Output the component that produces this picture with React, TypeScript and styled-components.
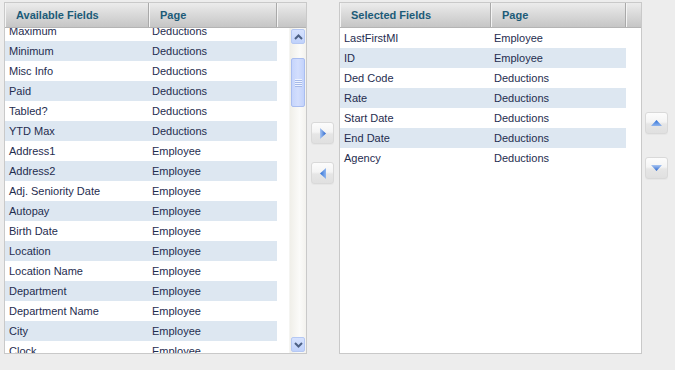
import React, { useLayoutEffect, useRef } from "react";
import styled, { createGlobalStyle } from "styled-components";

const Global = createGlobalStyle`
  html, body { margin: 0; padding: 0; background: #ededed; }
  body { font-family: "Liberation Sans", Arial, sans-serif; font-size: 11px; }
`;

type Row = { name: string; page: string };

const available: Row[] = [
  ["Maximum", "Deductions"],
  ["Minimum", "Deductions"],
  ["Misc Info", "Deductions"],
  ["Paid", "Deductions"],
  ["Tabled?", "Deductions"],
  ["YTD Max", "Deductions"],
  ["Address1", "Employee"],
  ["Address2", "Employee"],
  ["Adj. Seniority Date", "Employee"],
  ["Autopay", "Employee"],
  ["Birth Date", "Employee"],
  ["Location", "Employee"],
  ["Location Name", "Employee"],
  ["Department", "Employee"],
  ["Department Name", "Employee"],
  ["City", "Employee"],
  ["Clock", "Employee"],
  ["Pay Group", "Employee"],
].map(([name, page]) => ({ name, page }));

const selected: Row[] = [
  ["LastFirstMI", "Employee"],
  ["ID", "Employee"],
  ["Ded Code", "Deductions"],
  ["Rate", "Deductions"],
  ["Start Date", "Deductions"],
  ["End Date", "Deductions"],
  ["Agency", "Deductions"],
].map(([name, page]) => ({ name, page }));

const Page = styled.div`
  display: flex;
  align-items: flex-start;
  padding: 2px 0 0 4px;
  height: 368px;
  box-sizing: border-box;
`;

const Panel = styled.div<{ $w: number }>`
  width: ${(p) => p.$w}px;
  height: 352px;
  box-sizing: border-box;
  border: 1px solid #c9c9c9;
  background: #fff;
  display: flex;
  flex-direction: column;
  overflow: hidden;
`;

const Header = styled.div<{ $cols: string }>`
  display: grid;
  grid-template-columns: ${(p) => p.$cols};
  height: 24px;
  flex: none;
  border-bottom: 1px solid #b4b4b4;
  background: linear-gradient(#ececec, #dadada 45%, #c6c6c6);
`;

const HeadCell = styled.div`
  display: flex;
  align-items: center;
  padding-left: 11px;
  font-weight: bold;
  font-size: 11px;
  color: #1c5b78;
  border-right: 1px solid #a9a9a9;
  box-shadow: inset 1px 0 0 #f4f4f4;
  white-space: nowrap;
`;

const HeadFill = styled.div`
  box-shadow: inset 1px 0 0 #f4f4f4;
`;

const Body = styled.div`
  flex: 1;
  display: flex;
  min-height: 0;
`;

const ListViewport = styled.div`
  flex: 1;
  overflow: hidden;
`;

const RowLine = styled.div<{ $cols: string; $shade: boolean }>`
  display: grid;
  grid-template-columns: ${(p) => p.$cols};
  height: 20px;
  line-height: 20px;
  color: #1f2d4f;
  font-size: 11px;
  white-space: nowrap;
  & > span {
    background: ${(p) => (p.$shade ? "#dde7f1" : "#ffffff")};
    padding-left: 3px;
    overflow: hidden;
  }
  & > span:first-child { padding-left: 4px; }
`;

const Scrollbar = styled.div`
  width: 16px;
  flex: none;
  margin-left: 12px;
  display: flex;
  flex-direction: column;
  background: linear-gradient(90deg, #f0efe9, #fbfbf9 60%, #f3f2ee);
  border-left: 1px solid #f5f5f2;
`;

const ScrollBtn = styled.div<{ $end?: boolean }>`
  height: 15px;
  margin: 1px 1px ${(p) => (p.$end ? 1 : 0)}px 1px;
  flex: none;
  box-sizing: border-box;
  border: 1px solid #b5c8f3;
  border-radius: 2px;
  background: linear-gradient(#d6e2fe, #c0d2fb);
  display: flex;
  align-items: center;
  justify-content: center;
`;

const Track = styled.div`
  flex: 1;
  display: flex;
  flex-direction: column;
  padding: 0 1px;
`;

const Thumb = styled.div`
  margin-top: 14px;
  height: 49px;
  box-sizing: border-box;
  border: 1px solid #a9bdf0;
  border-radius: 2px;
  background: linear-gradient(90deg, #c6d5fc, #d3defd 50%, #c2d2fb);
  display: flex;
  align-items: center;
  justify-content: center;
`;

const ButtonCol = styled.div<{ $pt: number; $gap: number; $ml: number; $mr: number }>`
  display: flex;
  flex-direction: column;
  gap: ${(p) => p.$gap}px;
  padding-top: ${(p) => p.$pt}px;
  margin-left: ${(p) => p.$ml}px;
  margin-right: ${(p) => p.$mr}px;
`;

const MoveBtn = styled.button`
  width: 23px;
  height: 22px;
  padding: 0;
  box-sizing: border-box;
  border: 1px solid #d9d9d9;
  border-radius: 3px;
  background: linear-gradient(#fcfcfc, #f4f4f4 45%, #e6e6e6 55%, #e0e0e0);
  box-shadow: 0 1px 0 #e6e6e6;
  display: flex;
  align-items: center;
  justify-content: center;
  cursor: pointer;
`;

const Chevron = ({ dir }: { dir: "up" | "down" }) => (
  <svg width="9" height="6" viewBox="0 0 9 6">
    <path
      d={dir === "up" ? "M1 5 L4.5 1.5 L8 5" : "M1 1 L4.5 4.5 L8 1"}
      fill="none"
      stroke="#4d6185"
      strokeWidth="2"
    />
  </svg>
);

const Grip = () => (
  <svg width="7" height="8" viewBox="0 0 7 8">
    {[0, 2, 4, 6].map((y) => (
      <rect key={y} x="0" y={y} width="7" height="1" fill="#eef3ff" />
    ))}
    {[1, 3, 5, 7].map((y) => (
      <rect key={y} x="0" y={y} width="7" height="1" fill="#a6b9e8" />
    ))}
  </svg>
);

const Tri = ({ dir }: { dir: "left" | "right" | "up" | "down" }) => {
  const id = `g-${dir}`;
  const horiz = dir === "left" || dir === "right";
  const pts = {
    right: "2,0 8,5.5 2,11",
    left: "8,0 2,5.5 8,11",
    up: "0,6 5.5,0 11,6",
    down: "0,0 5.5,6 11,0",
  }[dir];
  return (
    <svg width={horiz ? 10 : 11} height={horiz ? 11 : 7} viewBox={horiz ? "0 0 10 11" : "0 0 11 7"}>
      <defs>
        <linearGradient id={id} x1="0" y1="0" x2={horiz ? "1" : "0"} y2={horiz ? "0" : "1"}>
          <stop offset="0" stopColor={dir === "left" || dir === "up" ? "#2d6fd6" : "#a9c6f2"} />
          <stop offset="1" stopColor={dir === "left" || dir === "up" ? "#8fb5ef" : "#2a66cf"} />
        </linearGradient>
      </defs>
      <polygon points={pts} fill={`url(#${id})`} />
    </svg>
  );
};

const LEFT_COLS = "144px 128px";
const RIGHT_COLS = "151px 135px";

const FieldList = ({ rows, cols, scroll }: { rows: Row[]; cols: string; scroll: number }) => {
  const ref = useRef<HTMLDivElement>(null);
  useLayoutEffect(() => {
    if (ref.current) ref.current.scrollTop = scroll;
  }, [scroll]);
  return (
    <ListViewport ref={ref}>
      {rows.map((r, i) => (
        <RowLine key={r.name} $cols={cols} $shade={i % 2 === 1}>
          <span>{r.name}</span>
          <span>{r.page}</span>
        </RowLine>
      ))}
    </ListViewport>
  );
};

export default function App() {
  return (
    <>
      <Global />
      <Page>
        <Panel $w={303}>
          <Header $cols={`${LEFT_COLS} 1fr`}>
            <HeadCell>Available Fields</HeadCell>
            <HeadCell>Page</HeadCell>
            <HeadFill />
          </Header>
          <Body>
            <FieldList rows={available} cols={LEFT_COLS} scroll={7} />
            <Scrollbar>
              <ScrollBtn>
                <Chevron dir="up" />
              </ScrollBtn>
              <Track>
                <Thumb>
                  <Grip />
                </Thumb>
              </Track>
              <ScrollBtn $end>
                <Chevron dir="down" />
              </ScrollBtn>
            </Scrollbar>
          </Body>
        </Panel>
        <ButtonCol $pt={120} $gap={18} $ml={4} $mr={5}>
          <MoveBtn aria-label="Add">
            <Tri dir="right" />
          </MoveBtn>
          <MoveBtn aria-label="Remove">
            <Tri dir="left" />
          </MoveBtn>
        </ButtonCol>
        <Panel $w={303}>
          <Header $cols={`${RIGHT_COLS} 1fr`}>
            <HeadCell>Selected Fields</HeadCell>
            <HeadCell>Page</HeadCell>
            <HeadFill />
          </Header>
          <Body>
            <FieldList rows={selected} cols={RIGHT_COLS} scroll={0} />
          </Body>
        </Panel>
        <ButtonCol $pt={110} $gap={23} $ml={3} $mr={0}>
          <MoveBtn aria-label="Move up">
            <Tri dir="up" />
          </MoveBtn>
          <MoveBtn aria-label="Move down">
            <Tri dir="down" />
          </MoveBtn>
        </ButtonCol>
      </Page>
    </>
  );
}
